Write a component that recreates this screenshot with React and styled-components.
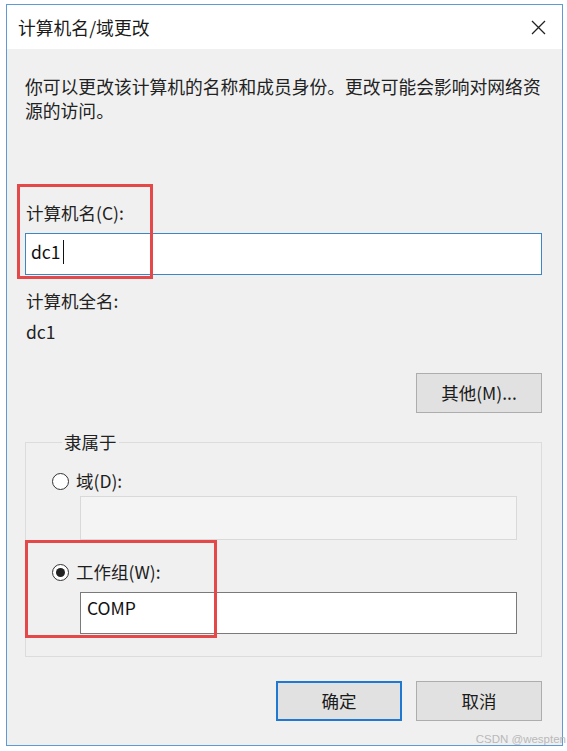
import React from "react";
import styled, { createGlobalStyle } from "styled-components";

const Global = createGlobalStyle`
  html, body { margin: 0; padding: 0; background: #ffffff; }
  body {
    font-family: "Noto Sans CJK SC", "Noto Sans", "Liberation Sans", sans-serif;
    color: #1e1e1e;
  }
  * { box-sizing: border-box; }
`;

const Page = styled.div`
  position: relative;
  width: 567px;
  height: 751px;
  padding: 4px 4px 5px 6px;
  overflow: hidden;
`;

const Window = styled.div`
  width: 557px;
  height: 742px;
  border: 1px solid #5e9ad3;
  display: flex;
  flex-direction: column;
  background: #f0f0f0;
`;

const TitleBar = styled.div`
  height: 44px;
  flex: none;
  background: #ffffff;
  display: flex;
  align-items: center;
  justify-content: space-between;
  padding: 0 16px 0 11px;
`;

const TitleText = styled.div`
  font-size: 17.8px;
  line-height: 24px;
  color: #1a1a1a;
`;

const CloseIcon = styled.svg`
  width: 15px;
  height: 15px;
  display: block;
`;

const Body = styled.div`
  flex: 1;
  display: flex;
  flex-direction: column;
  padding: 25px 20px 0 18px;
  font-size: 17.5px;
  line-height: 24px;
`;

const Description = styled.p`
  margin: 0;
  width: 522px;
  font-size: 17.8px;
  color: #222;
`;

const Field = styled.div`
  position: relative;
  display: flex;
  flex-direction: column;
  margin-top: ${(p) => p.$top || 0}px;
`;

const Label = styled.div`
  margin-left: ${(p) => p.$indent || 1}px;
  margin-top: ${(p) => p.$top || 0}px;
  color: #222;
`;

const TextBox = styled.div`
  height: ${(p) => p.$h || 42}px;
  margin-top: ${(p) => p.$gap || 0}px;
  margin-left: ${(p) => p.$indent || 0}px;
  border: ${(p) =>
    p.$state === "focus"
      ? "1px solid #3d86c6"
      : p.$state === "disabled"
      ? "1px solid #d9d9d9"
      : "1px solid #7a7a7a"};
  background: ${(p) => (p.$state === "disabled" ? "#f4f4f4" : "#ffffff")};
  display: flex;
  align-items: flex-start;
  padding: ${(p) => p.$pad || "6px 5px"};
  color: #111;
`;

const Caret = styled.span`
  display: inline-block;
  width: 1px;
  height: 24px;
  background: #111;
  margin-left: 2px;
  margin-top: 0;
`;

const Annotation = styled.div`
  position: absolute;
  left: ${(p) => p.$x}px;
  top: ${(p) => p.$y}px;
  width: ${(p) => p.$w}px;
  height: ${(p) => p.$h}px;
  border: 3px solid #e54848;
  pointer-events: none;
`;

const ButtonRow = styled.div`
  display: flex;
  justify-content: flex-end;
  gap: 14px;
  margin-top: ${(p) => p.$top || 0}px;
`;

const Button = styled.div`
  width: 126px;
  height: 40px;
  display: flex;
  align-items: center;
  justify-content: center;
  background: #e1e1e1;
  border: ${(p) => (p.$primary ? "2px solid #1f78d1" : "1px solid #adadad")};
  color: #1a1a1a;
  font-size: 17.5px;
`;

const Group = styled.fieldset`
  margin: 17px 0 0 0;
  border: 1px solid #dcdcdc;
  padding: 3px 24px 22px 26px;
  min-width: 0;
  display: flex;
  flex-direction: column;
`;

const Legend = styled.legend`
  padding: 0 2px;
  margin-left: 10px;
  color: #222;
  line-height: 24px;
`;

const RadioRow = styled.div`
  display: flex;
  align-items: center;
  gap: 7px;
  height: 24px;
  margin-top: ${(p) => p.$top || 0}px;
`;

const RadioCircle = styled.span`
  width: 17px;
  height: 17px;
  border-radius: 50%;
  border: 1px solid #333;
  background: #fff;
  display: flex;
  align-items: center;
  justify-content: center;
  flex: none;
  &::after {
    content: "";
    width: 9px;
    height: 9px;
    border-radius: 50%;
    background: ${(p) => (p.$checked ? "#222" : "transparent")};
  }
`;

const Watermark = styled.div`
  position: absolute;
  right: 1px;
  bottom: 5px;
  font-family: "Liberation Sans", "Noto Sans", sans-serif;
  font-size: 11.5px;
  line-height: 14px;
  color: #b9b9b9;
  white-space: nowrap;
`;

export default function App() {
  return (
    <>
      <Global />
      <Page>
        <Window>
          <TitleBar>
            <TitleText>计算机名/域更改</TitleText>
            <CloseIcon viewBox="0 0 15 15">
              <path d="M1 1L14 14M14 1L1 14" stroke="#222" strokeWidth="1.3" fill="none" />
            </CloseIcon>
          </TitleBar>
          <Body>
            <Description>
              你可以更改该计算机的名称和成员身份。更改可能会影响对网络资源的访问。
            </Description>

            <Field $top={79}>
              <Label>计算机名(C):</Label>
              <TextBox $gap={8} $state="focus">
                dc1
                <Caret />
              </TextBox>
              <Annotation $x={-8} $y={-17} $w={136} $h={95} />
            </Field>

            <Field $top={14}>
              <Label>计算机全名:</Label>
              <Label $top={7}>dc1</Label>
            </Field>

            <ButtonRow $top={29}>
              <Button>其他(M)...</Button>
            </ButtonRow>

            <Group>
              <Legend>隶属于</Legend>
              <RadioRow $top={12}>
                <RadioCircle />
                <span>域(D):</span>
              </RadioRow>
              <TextBox $gap={3} $indent={28} $h={44} $state="disabled" />
              <Field $top={20}>
                <RadioRow>
                  <RadioCircle $checked />
                  <span>工作组(W):</span>
                </RadioRow>
                <TextBox $gap={8} $indent={28} $h={42} $pad="3px 6px">
                  COMP
                </TextBox>
                <Annotation $x={-27} $y={-20} $w={192} $h={98} />
              </Field>
            </Group>

            <ButtonRow $top={24}>
              <Button $primary>确定</Button>
              <Button>取消</Button>
            </ButtonRow>
          </Body>
        </Window>
        <Watermark>CSDN @wespten</Watermark>
      </Page>
    </>
  );
}
